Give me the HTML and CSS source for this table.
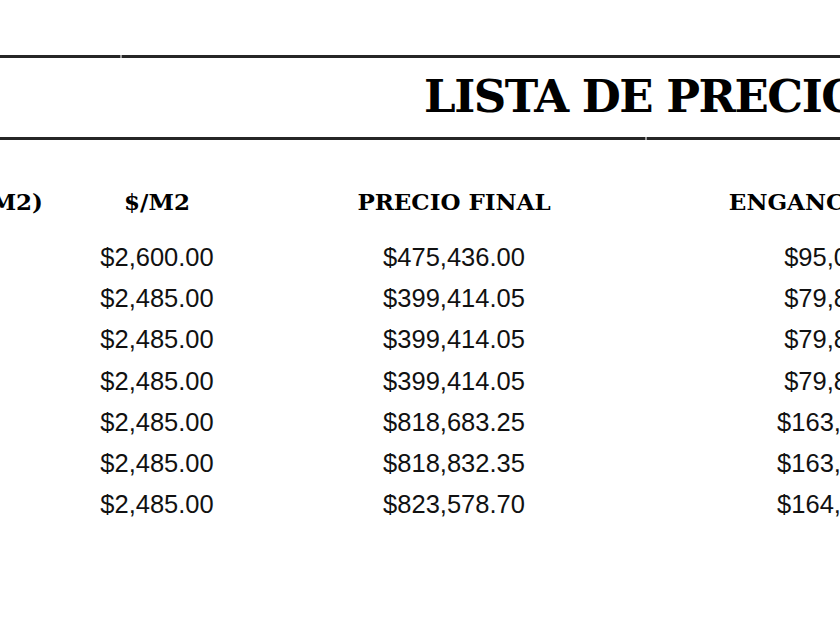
FILE: index.html
```
<!DOCTYPE html>
<html lang="es">
<head>
<meta charset="utf-8">
<title>Lista de precios</title>
<link rel="stylesheet" href="styles.css">
</head>
<body>
<div class="sheet">
  <div class="title-row">
    <span class="grid-gap gap-top"></span>
    <span class="grid-gap gap-bottom"></span>
    <h1 class="title">LISTA DE PRECIOS</h1>
  </div>
  <div class="table">
    <div class="row head">
      <div class="cell first">SUPERFICIE (M2)</div>
      <div class="cell">$/M2</div>
      <div class="cell">PRECIO FINAL</div>
      <div class="cell">ENGANCHE (20%)</div>
    </div>
    <div class="row data"><div class="cell first"></div><div class="cell">$2,600.00</div><div class="cell">$475,436.00</div><div class="cell">$95,087.20</div></div>
    <div class="row data"><div class="cell first"></div><div class="cell">$2,485.00</div><div class="cell">$399,414.05</div><div class="cell">$79,882.81</div></div>
    <div class="row data"><div class="cell first"></div><div class="cell">$2,485.00</div><div class="cell">$399,414.05</div><div class="cell">$79,882.81</div></div>
    <div class="row data"><div class="cell first"></div><div class="cell">$2,485.00</div><div class="cell">$399,414.05</div><div class="cell">$79,882.81</div></div>
    <div class="row data"><div class="cell first"></div><div class="cell">$2,485.00</div><div class="cell">$818,683.25</div><div class="cell">$163,736.65</div></div>
    <div class="row data"><div class="cell first"></div><div class="cell">$2,485.00</div><div class="cell">$818,832.35</div><div class="cell">$163,766.47</div></div>
    <div class="row data"><div class="cell first"></div><div class="cell">$2,485.00</div><div class="cell">$823,578.70</div><div class="cell">$164,715.74</div></div>
  </div>
</div>
</body>
</html>
```
FILE: styles.css
```
html, body {
  margin: 0;
  padding: 0;
  background: #ffffff;
  overflow: hidden;
}

body {
  width: 840px;
  height: 630px;
  color: #000;
}

.sheet {
  padding-top: 55px;
}

.title-row {
  position: relative;
  border-top: 3px solid #262626;
  border-bottom: 3px solid #262626;
  height: 79px;
  box-sizing: content-box;
  display: flex;
  align-items: center;
  padding-left: 424px;
  white-space: nowrap;
}

.grid-gap {
  position: absolute;
  width: 2px;
  height: 3px;
  background: #9a9a9a;
}

.gap-top {
  left: 120px;
  top: -3px;
}

.gap-bottom {
  left: 645px;
  bottom: -3px;
}

.title {
  margin: 0;
  font-family: "DejaVu Serif", "Liberation Serif", serif;
  font-weight: bold;
  font-size: 45px;
  letter-spacing: -1.5px;
  line-height: 1;
  color: #000;
  padding-bottom: 2px;
}

.table {
  margin-top: 42px;
}

.row {
  display: grid;
  grid-template-columns: 43px 228px 366px 422px;
  white-space: nowrap;
}

.cell {
  display: flex;
  justify-content: center;
}

.cell.first {
  justify-content: flex-end;
}

.head {
  font-family: "DejaVu Serif", "Liberation Serif", serif;
  font-weight: bold;
  font-size: 23px;
  line-height: 40px;
  margin-bottom: 15px;
}

.data {
  font-family: "Liberation Sans", Arial, sans-serif;
  font-size: 25.5px;
  line-height: 41.2px;
  color: #111;
}
```
